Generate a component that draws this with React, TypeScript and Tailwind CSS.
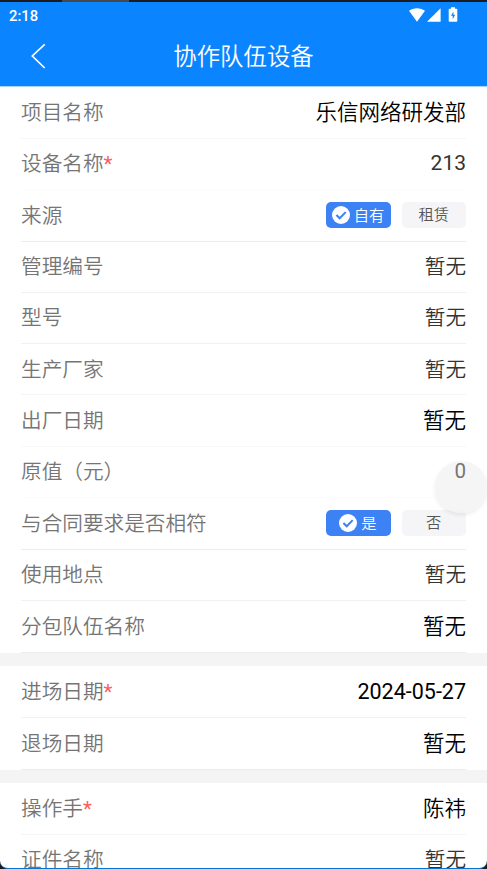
import React from 'react';
import clsx from 'clsx';

type Row = {
  label: string;
  value?: string;
  tone?: string;
  required?: boolean;
  options?: string[];
  line?: string;
  height?: string;
};

const STRONG = 'pt-[0.8px] text-[21.5px] text-black';
const NORMAL = 'pt-[0.8px] text-[20.6px] text-[#333333]';
const NUMBER = 'pb-[1px] text-[21px] font-normal text-[#333333]';
const MUTED = 'relative z-10 pb-[1px] text-[20.6px] font-normal text-[#757575]';

const sections: Row[][] = [
  [
    { label: '项目名称', value: '乐信网络研发部', tone: STRONG, line: 'border-[#f7f7f7]' },
    { label: '设备名称', value: '213', tone: NUMBER, required: true, line: 'border-[#fcfcfc]' },
    { label: '来源', options: ['自有', '租赁'], line: 'border-[#ececec]', height: 'h-[52px]' },
    { label: '管理编号', value: '暂无' },
    { label: '型号', value: '暂无' },
    { label: '生产厂家', value: '暂无', line: 'border-[#f5f5f5]' },
    { label: '出厂日期', value: '暂无', tone: STRONG, line: 'border-[#f8f8f8]' },
    { label: '原值（元）', value: '0', tone: MUTED, line: 'border-[#fcfcfc]' },
    { label: '与合同要求是否相符', options: ['是', '否'], line: 'border-[#ececec]', height: 'h-[52px]' },
    { label: '使用地点', value: '暂无' },
    { label: '分包队伍名称', value: '暂无', tone: STRONG, line: 'border-[#ececec]', height: 'h-[51.9px]' },
  ],
  [
    { label: '进场日期', value: '2024-05-27', tone: clsx(STRONG, 'font-normal'), required: true, height: 'h-[52px]' },
    { label: '退场日期', value: '暂无', tone: STRONG, line: 'border-[#ececec]', height: 'h-[52px]' },
  ],
  [
    { label: '操作手', value: '陈祎', tone: STRONG, required: true, line: 'border-[#f5f5f5]', height: 'h-[52px]' },
    { label: '证件名称', value: '暂无' },
  ],
];

const StatusBar = () => (
  <div className="flex h-[27px] justify-between pl-[9px] pr-[29px] text-white">
    <span className="pt-[4px] text-[14.8px] font-medium leading-[20px]">2:18</span>
    <div className="flex pt-[4px]">
      <svg width="16" height="17" viewBox="0 0 16 17" fill="currentColor">
        <path d="M0 4.8C4.4 1.3 11.6 1.3 16 4.8L8 15.8Z" />
      </svg>
      <svg className="ml-[2px]" width="14" height="17" viewBox="0 0 14 17" fill="currentColor">
        <path d="M13.6 2.2v13.6H0z" />
      </svg>
      <svg className="ml-[7px]" width="10" height="17" viewBox="0 0 10 17">
        <path d="M3 1.2h4v1.5h1.5q.8 0 .8.8v11.4q0 .8-.8.8h-7q-.8 0-.8-.8V3.5q0-.8.8-.8H3z" fill="#fff" />
        <path d="M5.4 5.4 3 9.8h1.7v3.5l2.5-4.6H5.4z" fill="#0b84ff" />
      </svg>
    </div>
  </div>
);

const Options = ({ options }: { options: string[] }) => (
  <div className="flex gap-[11px] text-[15.3px]">
    <div className="flex h-[26px] w-[65px] items-center justify-center gap-[4px] rounded-[5px] bg-[#3c82f4] text-white">
      <svg width="18" height="18" viewBox="0 0 18 18">
        <circle cx="9" cy="9" r="9" fill="#fff" />
        <path d="m4.4 9 3.3 3.3 6-6.2" fill="none" stroke="#3c82f4" strokeWidth="2" />
      </svg>
      <span className="pt-[3.6px] leading-none">{options[0]}</span>
    </div>
    <div className="flex h-[26px] w-[64.5px] items-center justify-center rounded-[5px] bg-[#f5f4f7] leading-none text-[#555555]">
      {options[1]}
    </div>
  </div>
);

const FormRow = ({ row }: { row: Row }) => (
  <div
    className={clsx(
      'ml-[20.5px] mr-[21px] flex shrink-0 items-center justify-between border-b',
      row.height ?? 'h-[51.2px]',
      row.line ?? 'border-[#f1f1f1]'
    )}
  >
    <span className="pl-[0.5px] pt-[0.8px] text-[20.65px] leading-[30px] text-[#757575]">
      {row.label}
      {row.required && <span className="font-normal text-[#ff5c5c]">*</span>}
    </span>
    {row.options ? (
      <Options options={row.options} />
    ) : (
      <span className={clsx('leading-[30px]', row.tone ?? NORMAL)}>{row.value}</span>
    )}
  </div>
);

const App = () => {
  return (
    <div className="h-[869px] w-[487px] overflow-hidden bg-[#1c1c1e] font-['Roboto','Noto_Sans_CJK_SC',sans-serif] font-[350]">
      <div className="flex h-[2px]">
        <div className="ml-[62px] w-[67px] bg-[#48484a]" />
      </div>
      <div className="relative flex h-[867px] flex-col overflow-hidden rounded-b-[8px] border-b border-[#0874d1] bg-white">
        <header className="mb-[1.4px] h-[84px] shrink-0 bg-[#0b84ff] shadow-[0_1px_0_#a9d4ff]">
          <StatusBar />
          <div className="grid h-[54px] grid-cols-[60px_1fr_60px] items-center text-white">
            <svg className="ml-[31px]" width="15" height="26" viewBox="0 0 15 26" fill="none" stroke="currentColor" strokeWidth="1.7">
              <path d="M13.7 1.3 1.3 13l12.4 12" />
            </svg>
            <h1 className="pt-[1px] text-center text-[23.4px] leading-[34px]">协作队伍设备</h1>
          </div>
        </header>
        {sections.map((rows, i) => (
          <div key={i} className="shrink-0">
            {i > 0 && <div className="h-[13px] bg-[#f4f4f4]" />}
            {rows.map((row) => (
              <FormRow key={row.label} row={row} />
            ))}
          </div>
        ))}
        <div className="absolute left-[435px] top-[458.5px] h-[52px] w-[52px] rounded-full bg-[#f2f2f2]/80 shadow-[0_2px_4px_rgba(0,0,0,0.08)]" />
      </div>
    </div>
  );
};

export default App;
